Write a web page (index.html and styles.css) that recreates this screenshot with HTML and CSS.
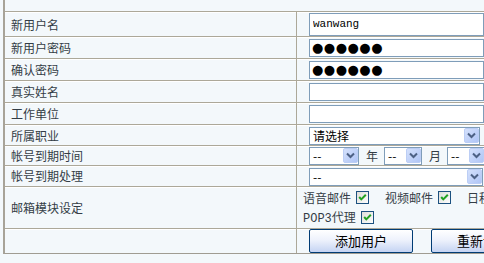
FILE: index.html
```html
<!DOCTYPE html>
<html>
<head>
<meta charset="utf-8">
<title>添加用户</title>
<link rel="stylesheet" href="styles.css">
</head>
<body>
<form class="user-form">
<table class="form">
    <tr class="head"><td colspan="2"></td></tr>
    <tr class="row-name">
        <td class="label">新用户名</td>
        <td class="field"><input class="text text-big" type="text" value="wanwang"></td>
    </tr>
    <tr>
        <td class="label">新用户密码</td>
        <td class="field"><input class="text dots" type="text" value="●●●●●●" readonly></td>
    </tr>
    <tr>
        <td class="label">确认密码</td>
        <td class="field"><input class="text dots" type="text" value="●●●●●●" readonly></td>
    </tr>
    <tr>
        <td class="label">真实姓名</td>
        <td class="field"><input class="text" type="text"></td>
    </tr>
    <tr>
        <td class="label">工作单位</td>
        <td class="field"><input class="text" type="text"></td>
    </tr>
    <tr class="row-job">
        <td class="label">所属职业</td>
        <td class="field">
            <span class="select select-job">
                <select><option>请选择</option></select>
                <span class="arrow"><svg width="15" height="15" viewBox="0 0 15 15"><defs><linearGradient id="ga" x1="0" y1="0" x2="1" y2="1"><stop offset="0" stop-color="#d6e2fc"/><stop offset="1" stop-color="#aec4f6"/></linearGradient></defs><rect x="0.5" y="0.5" width="14" height="14" rx="1.5" fill="url(#ga)" stroke="#bccef5"/><path d="M4 5.5 L7.5 9 L11 5.5" fill="none" stroke="#4d6185" stroke-width="2"/></svg></span>
            </span>
        </td>
    </tr>
    <tr class="row-date">
        <td class="label">帐号到期时间</td>
        <td class="field">
            <div class="date">
                <span class="select select-year">
                    <select><option>--</option></select>
                    <span class="arrow"><svg width="15" height="15" viewBox="0 0 15 15"><rect x="0.5" y="0.5" width="14" height="14" rx="1.5" fill="url(#ga)" stroke="#bccef5"/><path d="M4 5.5 L7.5 9 L11 5.5" fill="none" stroke="#4d6185" stroke-width="2"/></svg></span>
                </span>
                <span class="unit">年</span>
                <span class="select select-month">
                    <select><option>--</option></select>
                    <span class="arrow"><svg width="15" height="15" viewBox="0 0 15 15"><rect x="0.5" y="0.5" width="14" height="14" rx="1.5" fill="url(#ga)" stroke="#bccef5"/><path d="M4 5.5 L7.5 9 L11 5.5" fill="none" stroke="#4d6185" stroke-width="2"/></svg></span>
                </span>
                <span class="unit">月</span>
                <span class="select select-day">
                    <select><option>--</option></select>
                    <span class="arrow"><svg width="15" height="15" viewBox="0 0 15 15"><rect x="0.5" y="0.5" width="14" height="14" rx="1.5" fill="url(#ga)" stroke="#bccef5"/><path d="M4 5.5 L7.5 9 L11 5.5" fill="none" stroke="#4d6185" stroke-width="2"/></svg></span>
                </span>
            </div>
        </td>
    </tr>
    <tr class="row-expire">
        <td class="label">帐号到期处理</td>
        <td class="field">
            <span class="select select-wide">
                <select><option>--</option></select>
                <span class="arrow"><svg width="15" height="15" viewBox="0 0 15 15"><rect x="0.5" y="0.5" width="14" height="14" rx="1.5" fill="url(#ga)" stroke="#bccef5"/><path d="M4 5.5 L7.5 9 L11 5.5" fill="none" stroke="#4d6185" stroke-width="2"/></svg></span>
            </span>
        </td>
    </tr>
    <tr class="row-module">
        <td class="label">邮箱模块设定</td>
        <td class="field field-checks">
            <div class="checks">
                <label class="check"><span>语音邮件</span><svg class="cb" width="13" height="13" viewBox="0 0 13 13"><defs><linearGradient id="gc" x1="0" y1="0" x2="1" y2="1"><stop offset="0" stop-color="#dcdcd7"/><stop offset="1" stop-color="#ffffff"/></linearGradient></defs><rect x="0.5" y="0.5" width="12" height="12" fill="url(#gc)" stroke="#1c5180"/><path d="M3.2 6 L5.3 8.4 L9.8 3.8" fill="none" stroke="#21a121" stroke-width="2"/></svg></label>
                <label class="check"><span>视频邮件</span><svg class="cb" width="13" height="13" viewBox="0 0 13 13"><rect x="0.5" y="0.5" width="12" height="12" fill="url(#gc)" stroke="#1c5180"/><path d="M3.2 6 L5.3 8.4 L9.8 3.8" fill="none" stroke="#21a121" stroke-width="2"/></svg></label>
                <label class="check"><span>日程安排</span><svg class="cb" width="13" height="13" viewBox="0 0 13 13"><rect x="0.5" y="0.5" width="12" height="12" fill="url(#gc)" stroke="#1c5180"/><path d="M3.2 6 L5.3 8.4 L9.8 3.8" fill="none" stroke="#21a121" stroke-width="2"/></svg></label>
                <label class="check"><span><span class="latin">POP3</span>代理</span><svg class="cb" width="13" height="13" viewBox="0 0 13 13"><rect x="0.5" y="0.5" width="12" height="12" fill="url(#gc)" stroke="#1c5180"/><path d="M3.2 6 L5.3 8.4 L9.8 3.8" fill="none" stroke="#21a121" stroke-width="2"/></svg></label>
            </div>
        </td>
    </tr>
    <tr class="row-buttons">
        <td class="label"></td>
        <td class="field">
            <div class="buttons">
                <button type="button" class="btn">添加用户</button>
                <button type="reset" class="btn">重新设置</button>
            </div>
        </td>
    </tr>
</table>
</form>
</body>
</html>
```

FILE: styles.css
```css
* {
    box-sizing: border-box;
}

html, body {
    margin: 0;
    padding: 0;
}

body {
    width: 484px;
    height: 263px;
    overflow: hidden;
    background-color: #f3f8fb;
    font-family: "Noto Sans CJK SC", "Liberation Sans", sans-serif;
    font-size: 12px;
    color: #333d46;
}

.form {
    border-collapse: separate;
    border-spacing: 0;
    margin-left: 3px;
    width: 640px;
    border-left: 2px solid #a7a398;
    border-bottom: 1px solid #a09c92;
}

.form td {
    border-top: 1px solid #aca899;
    box-shadow: inset 0 1px 0 #fff;
    padding: 0;
    height: 22px;
    vertical-align: middle;
}

.form .head td {
    border-top: 0;
    box-shadow: none;
    height: 11px;
}

.form .row-name td {
    height: 25px;
}

.form .row-job td {
    height: 21px;
}

.form .row-date td,
.form .row-expire td {
    height: 20px;
}

.form .row-module td {
    height: 42px;
}

.form .row-buttons td {
    height: 25px;
}

.label {
    width: 292px;
    padding-left: 6px !important;
    border-right: 1px solid #aca899;
    white-space: nowrap;
}

.field {
    padding-left: 12px !important;
}

.text {
    display: block;
    width: 175px;
    height: 18px;
    margin: 0;
    padding: 0 3px;
    border: 1px solid #7f9db9;
    background: #fff;
    font-family: "Liberation Mono", monospace;
    font-size: 11px;
    color: #000;
    outline: none;
}

.text-big {
    height: 23px;
}

.dots {
    font-family: "DejaVu Sans", sans-serif;
    font-size: 13px;
    letter-spacing: 0.5px;
    padding-left: 2px;
}

.select {
    position: relative;
    display: inline-block;
    height: 18px;
    vertical-align: middle;
}

.select select {
    -webkit-appearance: none;
    appearance: none;
    display: block;
    width: 100%;
    height: 18px;
    margin: 0;
    padding: 0 0 0 3px;
    border: 1px solid #7f9db9;
    border-radius: 0;
    background: #fff;
    font-family: "Noto Sans CJK SC", sans-serif;
    font-size: 12px;
    line-height: 16px;
    color: #000;
    outline: none;
}

.select .arrow {
    position: absolute;
    top: 1px;
    right: 1px;
    width: 15px;
    height: 15px;
}

.select .arrow svg {
    display: block;
}

.select-job {
    width: 171px;
}

.select-year {
    width: 50px;
}

.select-month {
    width: 38px;
}

.select-day {
    width: 38px;
}

.select-wide {
    width: 174px;
}

.date {
    display: flex;
    align-items: center;
    white-space: nowrap;
}

.unit {
    padding: 0 6px 0 7px;
}

.field-checks {
    padding-left: 6px !important;
}

.checks {
    display: flex;
    flex-wrap: wrap;
    column-gap: 16px;
    row-gap: 6px;
    width: 250px;
}

.check {
    display: flex;
    align-items: center;
    gap: 5px;
    height: 14px;
    white-space: nowrap;
}

.check .latin {
    font-family: "Liberation Mono", monospace;
    font-size: 12px;
}

.cb {
    display: block;
}

.buttons {
    display: flex;
    gap: 18px;
}

.btn {
    width: 104px;
    height: 24px;
    margin: 0;
    padding: 0;
    border: 1px solid #003c74;
    border-radius: 2px;
    background: linear-gradient(#ffffff, #eef2fc 45%, #c5d4f3);
    font-family: "Noto Sans CJK SC", sans-serif;
    font-size: 13px;
    color: #000;
}
```
